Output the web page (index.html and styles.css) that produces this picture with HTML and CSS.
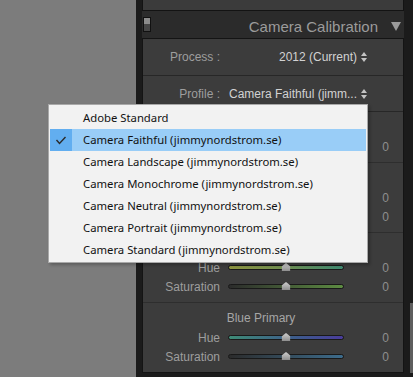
FILE: index.html
```html
<!DOCTYPE html>
<html lang="en">

<head>
    <meta charset="UTF-8">
    <meta name="viewport" content="width=device-width, initial-scale=1.0">
    <title>Camera Calibration</title>

    <link rel="stylesheet" href="styles.css">
</head>

<body>
    <div class="app">
        <div class="canvas"></div>
        <div class="sidebar">
            <div class="col">
                <div class="stub"></div>
                <div class="header">
                    <span class="toggle"></span>
                    <span class="title">Camera Calibration</span>
                    <svg class="arrow" width="10" height="9" viewBox="0 0 10 9"><polygon points="0,0 10,0 5,9" /></svg>
                </div>
                <div class="panel">
                    <div class="row top">
                        <span class="label">Process :</span>
                        <span class="pick">2012 (Current) <svg class="updown" width="6" height="10" viewBox="0 0 6 10"><polygon points="0,4 6,4 3,0" /><polygon points="0,6 6,6 3,10" /></svg></span>
                    </div>
                    <div class="row top prof">
                        <span class="label">Profile :</span>
                        <span class="pick">Camera Faithful (jimm... <svg class="updown" width="6" height="10" viewBox="0 0 6 10"><polygon points="0,4 6,4 3,0" /><polygon points="0,6 6,6 3,10" /></svg></span>
                    </div>

                    <div class="section">
                        <div class="heading">Shadows</div>
                        <div class="row">
                            <span class="label">Tint</span>
                            <span class="track tint"><span class="thumb"></span></span>
                            <span class="val">0</span>
                        </div>
                    </div>
                    <div class="section">
                        <div class="heading">Red Primary</div>
                        <div class="row">
                            <span class="label">Hue</span>
                            <span class="track red-hue"><span class="thumb"></span></span>
                            <span class="val">0</span>
                        </div>
                        <div class="row">
                            <span class="label">Saturation</span>
                            <span class="track red-sat"><span class="thumb"></span></span>
                            <span class="val">0</span>
                        </div>
                    </div>
                    <div class="section">
                        <div class="heading">Green Primary</div>
                        <div class="row">
                            <span class="label">Hue</span>
                            <span class="track green-hue"><span class="thumb"></span></span>
                            <span class="val">0</span>
                        </div>
                        <div class="row">
                            <span class="label">Saturation</span>
                            <span class="track green-sat"><span class="thumb"></span></span>
                            <span class="val">0</span>
                        </div>
                    </div>
                    <div class="section last">
                        <div class="heading">Blue Primary</div>
                        <div class="row">
                            <span class="label">Hue</span>
                            <span class="track blue-hue"><span class="thumb"></span></span>
                            <span class="val">0</span>
                        </div>
                        <div class="row">
                            <span class="label">Saturation</span>
                            <span class="track blue-sat"><span class="thumb"></span></span>
                            <span class="val">0</span>
                        </div>
                    </div>
                </div>
            </div>
            <div class="scroll"><span class="scroll-thumb"></span></div>
        </div>
    </div>

    <ul class="menu">
        <li>Adobe Standard</li>
        <li class="checked">
            <svg class="check" width="12" height="9" viewBox="0 0 12 9"><polyline points="1.5,4 4.5,7.5 10.5,1" /></svg>
            Camera Faithful (jimmynordstrom.se)
        </li>
        <li>Camera Landscape (jimmynordstrom.se)</li>
        <li>Camera Monochrome (jimmynordstrom.se)</li>
        <li>Camera Neutral (jimmynordstrom.se)</li>
        <li>Camera Portrait (jimmynordstrom.se)</li>
        <li>Camera Standard (jimmynordstrom.se)</li>
    </ul>
</body>
</html>
```

FILE: styles.css
```css
body { margin: 0; width: 413px; height: 377px; overflow: hidden; font-family: "Liberation Sans", Arial, sans-serif; }
.app { display: flex; height: 377px; }
.canvas { width: 136px; background-color: #7c7c7c; }

.sidebar {
    flex: 1;
    display: flex;
    background-color: #1b1b1b;
    padding-left: 6px;
}
.col { width: 262px; display: flex; flex-direction: column; }

.stub {
    height: 11px;
    box-sizing: border-box;
    background-color: #3b3b3b;
    border: 1px solid #131313;
    border-top: none;
}

.header {
    height: 27px;
    display: flex;
    align-items: center;
    background-color: #2b2b2b;
}
.toggle {
    width: 8px;
    height: 15px;
    box-sizing: border-box;
    margin-left: 1px;
    border: 1px solid #111;
    background: linear-gradient(#8c8c8c 50%, #474747 50%);
}
.title { margin-left: auto; margin-right: 13px; margin-top: 4px; font-size: 15px; color: #9b9b9b; }
.arrow { margin-right: 3px; margin-top: 4px; fill: #9a9a9a; }

.panel {
    height: 335px;
    box-sizing: border-box;
    background-color: #3c3c3c;
    border: 1px solid #141414;
    font-size: 12px;
    color: #9e9e9e;
}

.row {
    display: grid;
    grid-template-columns: 77px 116px 1fr;
    column-gap: 8px;
    align-items: center;
    height: 19px;
}
.row.top { height: 36px; border-bottom: 1px solid #272727; }
.row.prof { height: 35px; }
.label { text-align: right; }
.pick {
    grid-column: 2 / 4;
    justify-self: end;
    padding-right: 36px;
    color: #d2d2d2;
    display: flex;
    align-items: center;
    gap: 4px;
}
.updown { fill: #c4c4c4; }
.val { text-align: right; padding-right: 14px; color: #8e8e8e; }

.section { padding: 6px 0; border-bottom: 1px solid #2e2e2e; }
.section.last { border-bottom: none; }
.heading {
    height: 18px;
    line-height: 18px;
    margin-bottom: 1px;
    text-align: center;
    padding-right: 24px;
    color: #a6a6a6;
}

.track {
    position: relative;
    height: 5px;
    box-sizing: border-box;
    border: 1px solid #191919;
    border-radius: 3px;
}
.thumb {
    position: absolute;
    left: 50%;
    top: -3px;
    width: 9px;
    height: 8px;
    transform: translateX(-50%);
    background: linear-gradient(#cfcfcf, #8e8e8e);
    clip-path: polygon(50% 0, 100% 45%, 100% 100%, 0 100%, 0 45%);
}
.tint { background: linear-gradient(to right, #4f8a4a, #8a4a86); }
.red-hue { background: linear-gradient(to right, #9a3f6e, #a27a3c); }
.red-sat { background: linear-gradient(to right, #2c2c2c, #9a3c3c); }
.green-hue { background: linear-gradient(to right, #8d9440, #6f8f52 50%, #3f8a72); }
.green-sat { background: linear-gradient(to right, #2b2b2b, #5d8c42); }
.blue-hue { background: linear-gradient(to right, #3e8b76, #3d5a8c 60%, #4a3c9c); }
.blue-sat { background: linear-gradient(to right, #2b2b2b, #3d6c8c); }

.scroll { flex: 1; display: flex; justify-content: flex-end; padding-top: 303px; }
.scroll-thumb { width: 3px; height: 70px; background-color: #5e5e5e; }

.menu {
    position: absolute;
    left: 48px;
    top: 104px;
    width: 320px;
    height: 159px;
    box-sizing: border-box;
    margin: 0;
    padding: 2px 1px;
    list-style: none;
    background-color: #f2f2f2;
    border: 1px solid #a9a9a9;
    box-shadow: 2px 2px 3px rgba(0, 0, 0, 0.25);
    font-family: "Noto Sans", "Open Sans", sans-serif;
    font-size: 11.3px;
    color: #111;
}
.menu li {
    position: relative;
    height: 22px;
    line-height: 22px;
    padding-left: 33px;
}
.menu li.checked { background: linear-gradient(to right, #62aef0 22px, #99cdf7 22px); }
.check {
    position: absolute;
    left: 5px;
    top: 7px;
    fill: none;
    stroke: #2a2a2a;
    stroke-width: 1.4;
}
```
